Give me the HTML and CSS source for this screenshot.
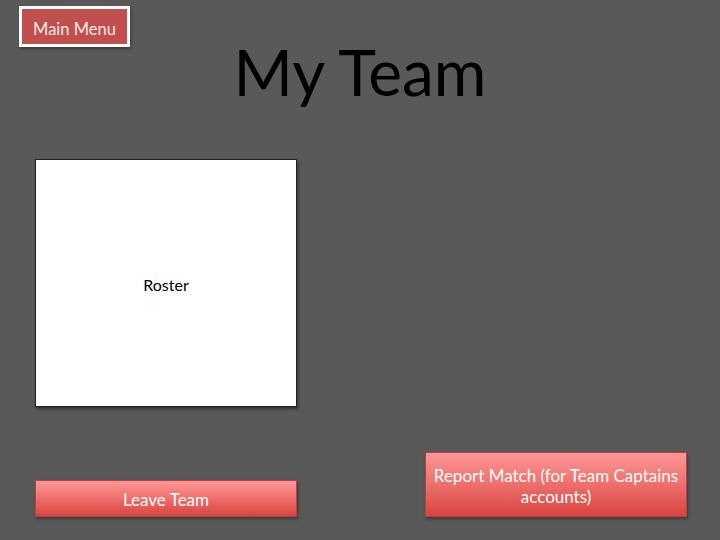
FILE: index.html
```html
<!DOCTYPE html>
<html>
<head>
<meta charset="utf-8">
<link rel="stylesheet" href="styles.css">
</head>
<body>
<div class="page">
  <header class="header">
    <div class="menu-cell"><button class="menu-btn">Main Menu</button></div>
    <h1 class="title">My Team</h1>
    <div></div>
  </header>
  <main class="content">
    <section class="roster"><span>Roster</span></section>
    <div></div>
    <button class="red-btn leave">Leave Team</button>
    <button class="red-btn report">Report Match (for Team Captains accounts)</button>
  </main>
</div>
</body>
</html>
```

FILE: styles.css
```css
* { box-sizing: border-box; }
html, body { margin: 0; padding: 0; }
body {
  background: #595959;
  font-family: Lato, "Open Sans", sans-serif;
  width: 720px;
  height: 540px;
  overflow: hidden;
}
.page {
  height: 540px;
  display: flex;
  flex-direction: column;
  padding: 6px 0 23px 0;
}
.header {
  display: grid;
  grid-template-columns: 1fr auto 1fr;
  padding: 0 19px;
}
.menu-cell { align-self: start; }
.menu-btn {
  width: 111px;
  height: 41px;
  background: #c0504d;
  border: 3px solid #fff;
  color: #fbe9e8;
  font-family: inherit;
  font-size: 16.5px;
  padding: 4px 0 0 0;
  box-shadow: 1px 2px 3px rgba(0,0,0,0.35);
}
.title {
  margin: 29px 0 0 0;
  font-weight: normal;
  font-size: 64px;
  line-height: 74px;
  color: #000;
}
.content {
  flex: 1;
  display: grid;
  grid-template-columns: 262px 262px;
  grid-template-rows: auto 1fr;
  column-gap: 128px;
  padding-left: 35px;
  margin-top: 50px;
}
.roster {
  height: 248px;
  background: #fff;
  border: 1px solid #222;
  box-shadow: 1px 2px 3px rgba(0,0,0,0.45);
  display: flex;
  align-items: center;
  justify-content: center;
  font-size: 16px;
  padding-top: 2px;
  color: #000;
}
.red-btn {
  align-self: end;
  background: linear-gradient(#fb9797, #f07370 45%, #d9443f);
  border: 1px solid #b8413e;
  color: #fff;
  font-family: inherit;
  font-size: 17px;
  line-height: 21px;
  padding: 2px 6px 0;
  box-shadow: 1px 2px 3px rgba(0,0,0,0.35);
}
.leave { height: 37px; }
.report { height: 65px; }
```
